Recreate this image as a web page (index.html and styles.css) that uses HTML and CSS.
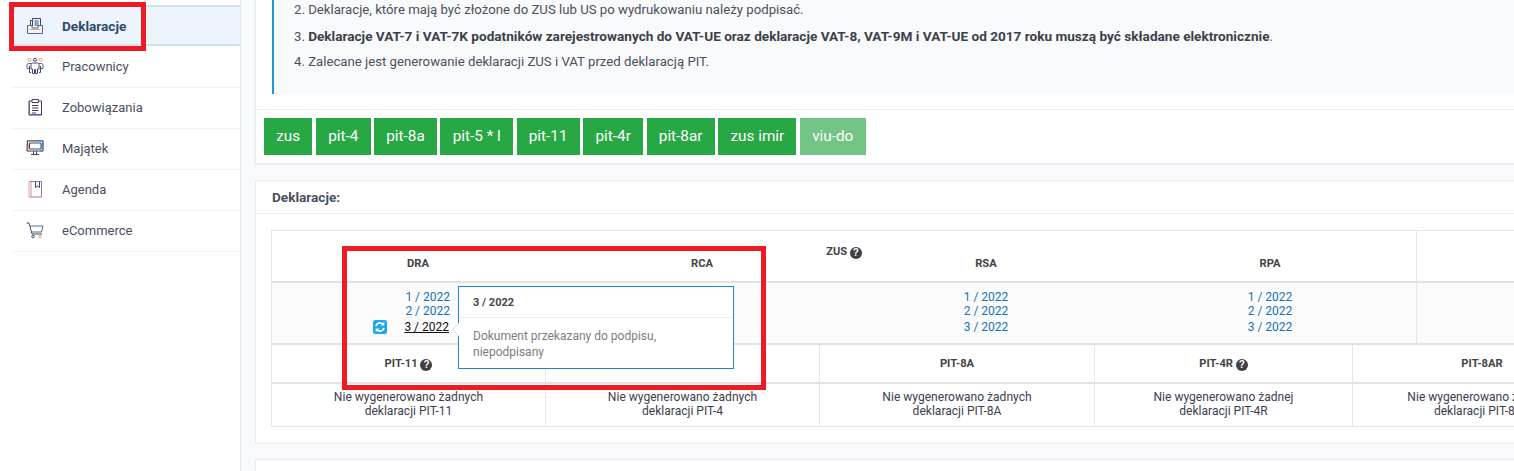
FILE: index.html
```html
<!DOCTYPE html>
<html lang="pl">
<head>
<meta charset="utf-8">
<title>Deklaracje</title>
<link rel="stylesheet" href="styles.css">
</head>
<body>
<div class="page">
  <nav class="sidebar">
    <a class="nav-item active">
      <svg class="nav-icon" viewBox="0 0 18 18"><path class="c1" d="M4.500 9V4.500M3.500 12.500h11"/><path class="c2" d="M14.500 9V1.500H6.500V9M4.500 9V3.500H6.500M8.500 4h4M8.500 6h4M8.500 8h4"/><path class="c3" d="M1.500 8.500v8h15v-8h-4.500v2.500H6V8.500z"/></svg>
      <span>Deklaracje</span>
    </a>
    <a class="nav-item">
      <svg class="nav-icon" viewBox="0 0 18 18"><circle class="c1" cx="3.500" cy="2.800" r="1.500"/><circle class="c2" cx="9" cy="2.800" r="1.500"/><circle class="c1" cx="14.500" cy="2.800" r="1.500"/><path class="c3" d="M5 6.500H2.500Q1 6.500 1 8v3.500h2.500M13 6.500h2.500Q17 6.500 17 8v3.500h-2.500"/><path class="c2" d="M6.500 6h5Q13 6 13 7.500V12h-1.500v4.500h-2V12.500h-1v4h-2V12H5V7.500Q5 6 6.500 6zM3.500 9v6.500H5M14.500 9v6.500H13"/></svg>
      <span>Pracownicy</span>
    </a>
    <a class="nav-item">
      <svg class="nav-icon" viewBox="0 0 18 18"><path class="c4" d="M3.500 3.500v13h11.500"/><path class="c7" d="M6 3H3v14h12.500V3h-3M6 1.500h6.500V4.500H6zM6 7.500h6.500M6 10h6.500M6 12.500h6.500M6 15h4"/></svg>
      <span>Zobowiązania</span>
    </a>
    <a class="nav-item">
      <svg class="nav-icon" viewBox="0 0 18 18"><path class="c1" d="M1 1.500h8M1 1.500v10.500h3M2.500 4.500v5"/><path class="c5" d="M9 1.500h8v10.500h-3M15.500 4.500v5"/><path class="c2" d="M1.500 2h15.500v10H1zM3.500 4h11.500v6H3.500zM7.500 12v3M10.500 12v3M5 15.500h8"/></svg>
      <span>Majątek</span>
    </a>
    <a class="nav-item">
      <svg class="nav-icon" viewBox="0 0 18 18"><path class="c1" d="M3 2v15"/><path class="c4" d="M3.500 1.500h12v15.500h-12"/><path class="c6" d="M5 2v15"/><path class="c2" d="M9.500 1.500v6l2-1.500 2 1.500v-6"/></svg>
      <span>Agenda</span>
    </a>
    <a class="nav-item">
      <svg class="nav-icon" viewBox="0 0 18 18"><path class="c2" d="M0.500 2h2.500l3 11h10"/><path class="c3" d="M4 5h13l-1.500 6H6"/><circle class="c2" cx="7" cy="15.500" r="1.300"/><circle class="c1" cx="14" cy="15.500" r="1.300"/></svg>
      <span>eCommerce</span>
    </a>
  </nav>

  <main class="content">
    <section class="card info-card">
      <div class="callout">
        <p class="note">2. Deklaracje, które mają być złożone do ZUS lub US po wydrukowaniu należy podpisać.</p>
        <p class="note">3. <strong>Deklaracje VAT-7 i VAT-7K podatników zarejestrowanych do VAT-UE oraz deklaracje VAT-8, VAT-9M i VAT-UE od 2017 roku muszą być składane elektronicznie</strong>.</p>
        <p class="note">4. Zalecane jest generowanie deklaracji ZUS i VAT przed deklaracją PIT.</p>
      </div>
      <div class="card-actions">
        <a class="btn">zus</a>
        <a class="btn">pit-4</a>
        <a class="btn">pit-8a</a>
        <a class="btn">pit-5 * l</a>
        <a class="btn">pit-11</a>
        <a class="btn">pit-4r</a>
        <a class="btn">pit-8ar</a>
        <a class="btn">zus imir</a>
        <a class="btn disabled">viu-do</a>
      </div>
    </section>

    <section class="card decl-card">
      <h2 class="card-title">Deklaracje:</h2>
      <div class="card-body">
        <div class="decl-table">
          <div class="zus-grid">
            <div class="zus-head">
              <div class="zus-title">ZUS <i class="help">?</i></div>
              <div class="zus-labels">
                <span class="col-label first">DRA</span>
                <span class="col-label">RCA</span>
                <span class="col-label">RSA</span>
                <span class="col-label last">RPA</span>
              </div>
            </div>
            <div class="spare-head"></div>
            <div class="zus-data">
              <div class="dates dra">
                <div class="dra-line"><a class="date">1 / 2022</a></div>
                <div class="dra-line"><a class="date">2 / 2022</a></div>
                <div class="dra-line third">
                  <svg class="sync" viewBox="0 0 14 14"><rect width="14" height="14" rx="2.500" fill="#1aa8ea"/><path d="M3 6.200A4 4 0 0 1 10 4.300" fill="none" stroke="#fff" stroke-width="1.700"/><path d="M11.300 1.800v3.700H7.600z" fill="#fff"/><path d="M11 7.800A4 4 0 0 1 4 9.700" fill="none" stroke="#fff" stroke-width="1.700"/><path d="M2.700 12.200V8.500h3.700z" fill="#fff"/></svg>
                  <a class="date current">3 / 2022</a>
                </div>
              </div>
              <div class="dates"></div>
              <div class="dates">
                <a class="date">1 / 2022</a>
                <a class="date">2 / 2022</a>
                <a class="date tall">3 / 2022</a>
              </div>
              <div class="dates last">
                <a class="date">1 / 2022</a>
                <a class="date">2 / 2022</a>
                <a class="date tall">3 / 2022</a>
              </div>
            </div>
            <div class="spare-data"></div>
          </div>
          <div class="pit-grid">
            <div class="pit-head">PIT-11 <i class="help">?</i></div>
            <div class="pit-head">PIT-4</div>
            <div class="pit-head">PIT-8A</div>
            <div class="pit-head">PIT-4R <i class="help">?</i></div>
            <div class="pit-head">PIT-8AR</div>
            <div class="pit-cell">Nie wygenerowano żadnych<br>deklaracji PIT-11</div>
            <div class="pit-cell">Nie wygenerowano żadnych<br>deklaracji PIT-4</div>
            <div class="pit-cell">Nie wygenerowano żadnych<br>deklaracji PIT-8A</div>
            <div class="pit-cell">Nie wygenerowano żadnej<br>deklaracji PIT-4R</div>
            <div class="pit-cell">Nie wygenerowano żadnych<br>deklaracji PIT-8AR</div>
          </div>
          <div class="popover">
            <div class="popover-title">3 / 2022</div>
            <div class="popover-body">Dokument przekazany do podpisu, niepodpisany</div>
          </div>
          <div class="highlight table-mark"></div>
        </div>
      </div>
    </section>

    <section class="card next-card"></section>
  </main>
  <div class="highlight nav-mark"></div>
</div>
</body>
</html>
```

FILE: styles.css
```css
* { box-sizing: border-box; }
html, body { margin: 0; height: 100%; }
body {
  background: #f9fafc;
  color: #3f4254;
  font-family: Roboto, "Liberation Sans", sans-serif;
  font-size: 12px;
  overflow: hidden;
}
.page { position: relative; display: flex; width: 1514px; height: 471px; overflow: hidden; }

.sidebar {
  flex: none;
  width: 241px;
  padding: 5px 0 0 12px;
  background: #fff;
  border-right: 1px solid #e6e9ef;
}
.nav-item {
  display: flex;
  align-items: center;
  height: 41px;
  padding: 0 0 2px 14px;
  color: #4a4f66;
  font-size: 13px;
  border-bottom: 1px solid #f1f3f6;
}
.nav-item span { margin-left: 18px; }
.nav-item.active {
  margin-bottom: 1px;
  padding-bottom: 0;
  background: #eef4fb;
  border-top: 2px solid #cfe2f0;
  border-bottom: 2px solid #cfe2f0;
  color: #2f4a6d;
  font-weight: 700;
  font-size: 13.600px;
}
.nav-icon { flex: none; width: 18px; height: 18px; fill: none; stroke-width: 1; }
.c1 { stroke: #f0a468; }
.c2 { stroke: #3f4a68; }
.c3 { stroke: #4f6a92; }
.c4 { stroke: #a06cc0; }
.c5 { stroke: #5fa6e6; }
.c6 { stroke: #c08fd8; }
.c7 { stroke: #4c3a66; }

.content { flex: none; width: 1400px; padding-left: 14px; }
.card {
  width: 1386px;
  background: #fff;
  border: 1px solid #e9ebf0;
}
.info-card { height: 164px; border-top: 0; box-shadow: 0 1px 2px rgba(0, 0, 0, .05); }
.callout {
  height: 94px;
  margin-left: 16px;
  padding: 0 0 0 20px;
  background: #f9fafc;
  border-left: 2px solid #1e96d8;
}
.note { margin: 0 0 5.500px; line-height: 20px; color: #4c4f5e; font-size: 13.200px; white-space: nowrap; }
.note strong { color: #3c3f4c; font-size: 13.600px; font-weight: 700; }
.card-actions {
  height: 55px;
  margin-top: 15px;
  padding: 8px 0 0 8px;
  border-top: 1px solid #ebedf2;
  font-size: 14px;
}
.btn {
  display: inline-block;
  height: 37px;
  padding: 0 12.250px;
  background: #28a745;
  color: #fff;
  font-size: 15.300px;
  line-height: 37px;
}
.btn.disabled { opacity: .65; }

.decl-card { height: 264px; margin-top: 16px; }
.card-title {
  height: 33px;
  margin: 0;
  padding-left: 16px;
  border-bottom: 1px solid #ebedf2;
  color: #4a4f5e;
  font-size: 13.600px;
  font-weight: 700;
  line-height: 32px;
}
.card-body { padding: 16px 0 0 15px; }
.decl-table {
  position: relative;
  width: 1370px;
  height: 197px;
  border: 1px solid #e3e6ea;
  color: #3c4050;
}
.zus-grid { display: grid; grid-template-columns: 1145px 1fr; }
.zus-head { height: 50px; border-right: 1px solid #e3e6ea; padding-top: 14px; text-align: center; }
.zus-title { color: #444; font-size: 11px; font-weight: 700; line-height: 14px; }
.zus-labels {
  display: grid;
  grid-template-columns: 288px 284px 284px 288px;
  margin-top: -2px;
  font-size: 11.200px;
  font-weight: 700;
  line-height: 14px;
  color: #444;
}
.col-label.first { padding-left: 4px; }
.col-label.last { padding-right: 4px; }
.zus-data {
  display: grid;
  grid-template-columns: 288px 284px 284px 288px;
  height: 64px;
  padding-top: 7px;
  background: #fbfbfc;
  border-top: 2px solid #dfe2e6;
  border-bottom: 2px solid #dfe2e6;
  border-right: 1px solid #e3e6ea;
}
.spare-head { height: 50px; }
.spare-data {
  height: 64px;
  background: #fbfbfc;
  border-top: 2px solid #dfe2e6;
  border-bottom: 2px solid #dfe2e6;
}
.dates { display: flex; flex-direction: column; align-items: center; line-height: 14px; }
.dates.last { padding-right: 4px; }
.dates.dra { align-items: stretch; width: 77px; margin-left: 101px; }
.dra-line { display: flex; justify-content: flex-end; }
.dra-line.third { align-items: center; height: 16px; margin-top: 1px; }
.date { color: #1372b5; font-size: 12px; white-space: nowrap; }
.date.tall { margin-top: 2px; }
.date.current { color: #111; text-decoration: underline; margin-right: 1px; }
.sync { width: 14px; height: 14px; margin-right: auto; }

.help {
  display: inline-block;
  width: 12px;
  height: 12px;
  background: #3f3f46;
  border-radius: 50%;
  color: #fff;
  font-family: "Liberation Sans", sans-serif;
  font-size: 10px;
  font-style: normal;
  font-weight: 700;
  line-height: 12px;
  text-align: center;
  vertical-align: -1px;
}
.pit-grid { display: grid; grid-template-columns: 274px 274px 275px 258px 258px; }
.pit-head {
  height: 39px;
  border-right: 1px solid #e3e6ea;
  border-bottom: 2px solid #dfe2e6;
  color: #444;
  font-size: 11.200px;
  font-weight: 700;
  line-height: 38px;
  text-align: center;
}
.pit-cell {
  height: 43px;
  padding-top: 6px;
  border-right: 1px solid #e3e6ea;
  font-size: 12.050px;
  line-height: 14px;
  text-align: center;
}
.pit-grid > :nth-child(5), .pit-grid > :nth-child(10) { border-right: 0; }

.popover {
  position: absolute;
  left: 186px;
  top: 55px;
  width: 276px;
  height: 83px;
  background: #fff;
  border: 1px solid #1e86c8;
}
.popover::before {
  content: "";
  position: absolute;
  left: -7px;
  top: 36px;
  width: 12px;
  height: 12px;
  background: #fff;
  border-left: 1px solid #d8dade;
  border-bottom: 1px solid #d8dade;
  transform: rotate(45deg) scale(.7);
}
.popover-title {
  height: 31px;
  padding-left: 14px;
  border-bottom: 1px solid #ececec;
  color: #464646;
  font-size: 11px;
  font-weight: 700;
  line-height: 31px;
}
.popover-body { padding: 10px 14px 0; color: #7d7d7d; font-size: 12px; line-height: 16px; }

.highlight { position: absolute; border: 5px solid #ed1c24; pointer-events: none; }
.nav-mark { left: 9px; top: 2px; width: 137px; height: 49px; }
.table-mark { left: 70px; top: 15px; width: 424px; height: 144px; }

.next-card { height: 40px; margin-top: 15px; }
```
